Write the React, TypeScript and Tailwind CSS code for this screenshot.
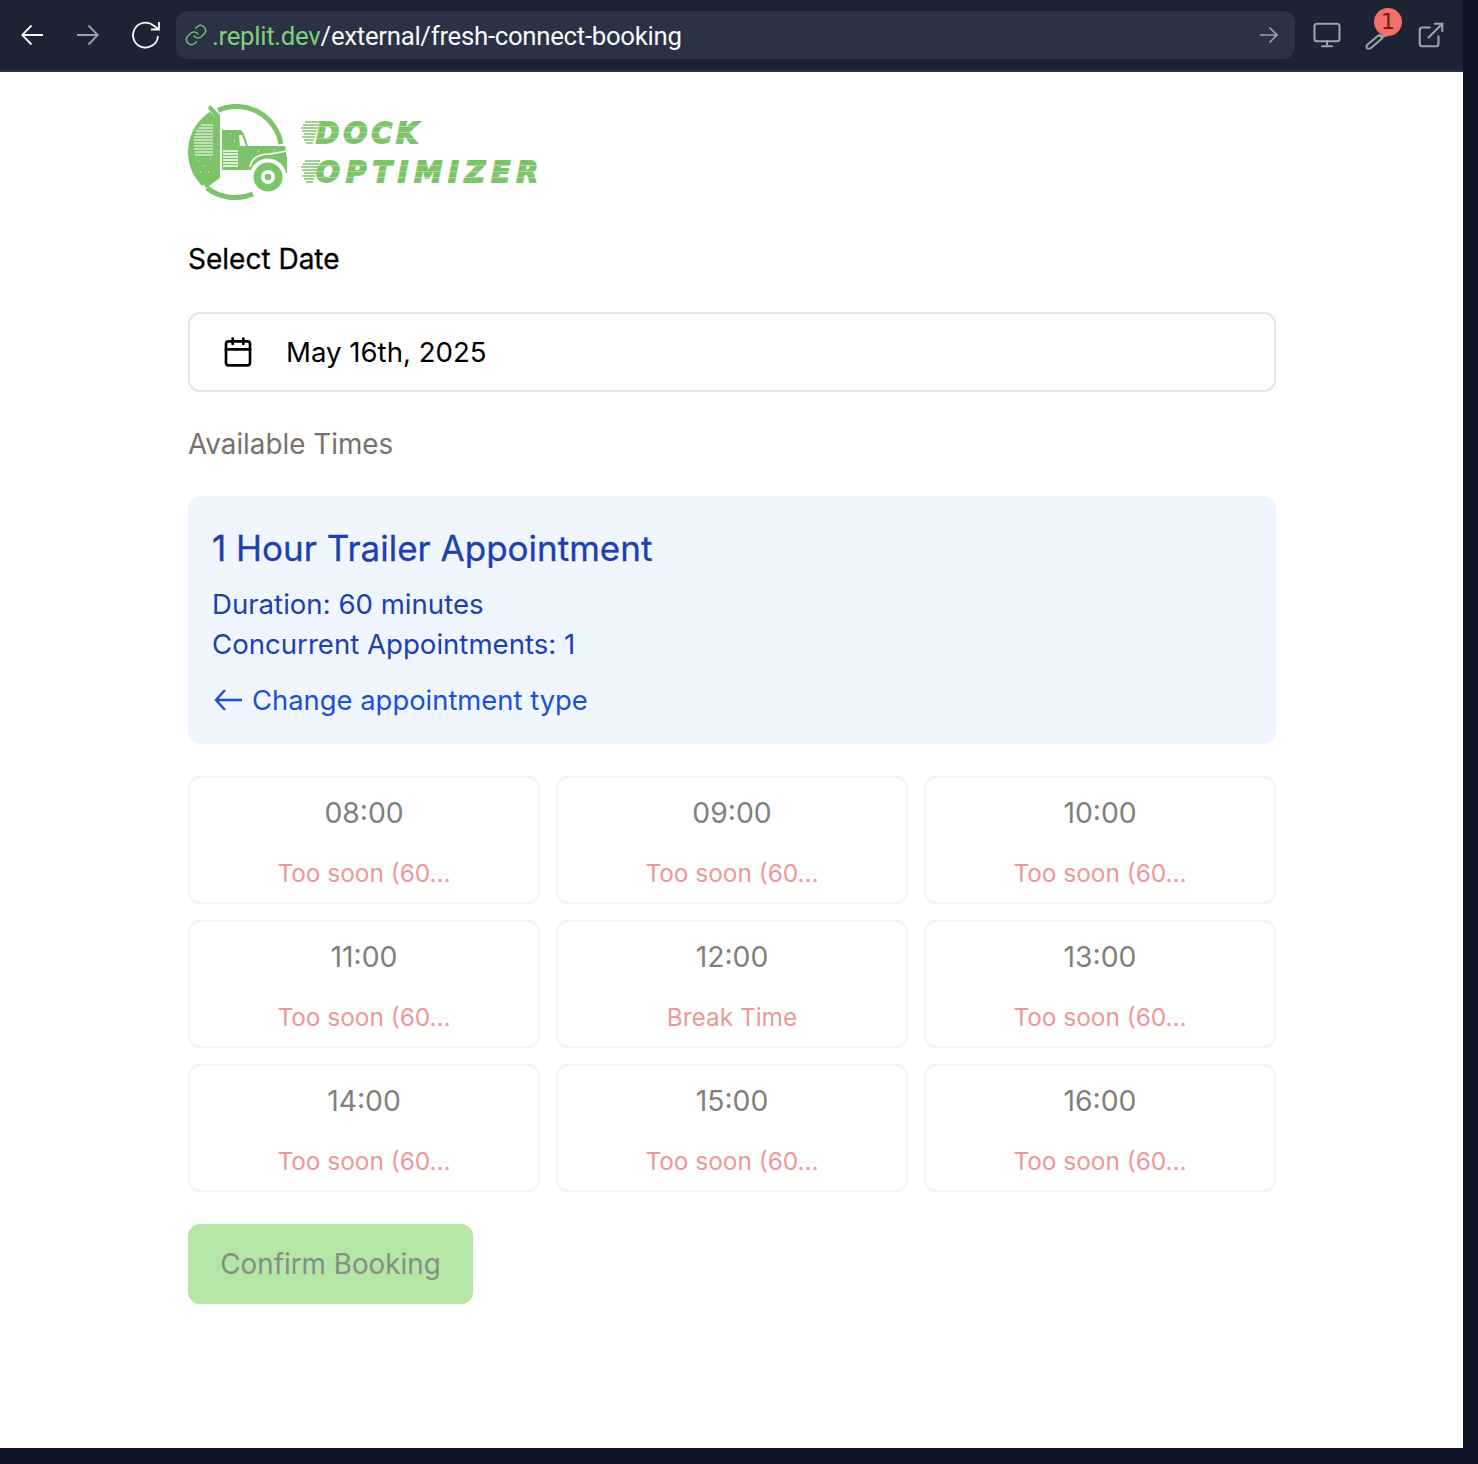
import { Calendar, ExternalLink, Monitor } from 'lucide-react'

const slots = [
  { time: '08:00', note: 'Too soon (60...' },
  { time: '09:00', note: 'Too soon (60...' },
  { time: '10:00', note: 'Too soon (60...' },
  { time: '11:00', note: 'Too soon (60...' },
  { time: '12:00', note: 'Break Time' },
  { time: '13:00', note: 'Too soon (60...' },
  { time: '14:00', note: 'Too soon (60...' },
  { time: '15:00', note: 'Too soon (60...' },
  { time: '16:00', note: 'Too soon (60...' },
]

const green = '#7cc36a'

// speed lines left of the wordmark, ends follow the slant of the first letter
const lineStarts = [117, 115, 113, 114, 116, 114, 116, 118]
const speedLines = (top: number) =>
  lineStarts.map((x, i) => (
    <path key={i} d={`M${x} ${top + i * 3}H${132 - i}`} stroke={green} strokeWidth="1.5" />
  ))

const Logo = () => (
  <svg width="352" height="96" viewBox="0 0 352 96" className="block">
    {/* ring */}
    <path d="M30 6.2 A45.5 45.5 0 0 1 93 40" fill="none" stroke={green} strokeWidth="5" />
    <path d="M19 84 A46 46 0 0 0 65 90" fill="none" stroke={green} strokeWidth="5" />
    {/* left half disc */}
    <path d="M22 7.7 L28 14 V73 L14 81.9 A48 48 0 0 1 22 7.7 Z" fill={green} />
    <path d="M13 21H25M10 24H25M8 27H25M7 30H25M6 33H25M6 36H25M6 39H25M6 42H25M6 45H25M7 48H25M7 51H25" stroke="#ffffff" strokeWidth="1.2" />
    {/* exhaust stack */}
    <path d="M22 1 L32 11 V74 L18 84 L16 81 L27 72 V13 L20 4 Z" fill={green} />
    {/* cab */}
    <path d="M34 26 H53 L56 30 L60 42 H97 L99 54 V69 H64 V66 H34 Z" fill={green} />
    <path d="M51 31 L54 31 L58 42 H52 Z" fill="#ffffff" />
    <path d="M35 47h15M35 50h15M35 53h15M35 56h15M35 59h15M35 62h15" stroke="#ffffff" strokeWidth="1.3" />
    {/* fender and wheel */}
    <path d="M62 63 Q64 50 82 50 L99 47" fill="none" stroke="#ffffff" strokeWidth="1.6" />
    <circle cx="80" cy="73" r="18.5" fill="#ffffff" />
    <circle cx="80" cy="73" r="14.5" fill={green} />
    <circle cx="80" cy="73" r="7" fill="#ffffff" />
    <circle cx="80" cy="73" r="3.3" fill={green} />
    {/* worn print speckle */}
    <path d="M10 57h1M16 62h1M22 55h1M12 68h1M20 68h1M42 30h1M46 37h1M70 47h1M86 46h1" stroke="#ffffff" strokeWidth="1.2" />
    {/* wordmark */}
    {speedLines(18)}
    {speedLines(57)}
    <text x="128" y="39" textLength="102" lengthAdjust="spacing" fill={green} stroke={green} strokeWidth="1.8" fontFamily="'DejaVu Sans', sans-serif" fontWeight="700" fontStyle="italic" fontSize="28">DOCK</text>
    <text x="128" y="78" textLength="222" lengthAdjust="spacing" fill={green} stroke={green} strokeWidth="1.8" fontFamily="'DejaVu Sans', sans-serif" fontWeight="700" fontStyle="italic" fontSize="28">OPTIMIZER</text>
    <path d="M126 22.5h226M126 28.5h226M126 34.5h226M126 61.5h226M126 67.5h226M126 73.5h226" stroke="#ffffff" strokeWidth="0.6" opacity="0.6" />
  </svg>
)

const App = () => {
  return (
    <div className="w-[1478px] h-[1464px] bg-[#0e1525] font-['Inter',sans-serif] overflow-hidden">
      <div className="w-[1463px] h-[1448px] bg-white">
        {/* browser bar */}
        <header className="h-[72px] bg-[#1c2333] border-b-2 border-[#2b3245] flex items-start pt-[11px] pl-[21px] pr-[14px]">
          <div className="flex items-center h-12 w-[155px] shrink-0">
            <svg width="22" height="22" viewBox="0 0 22 22" fill="none" stroke="#f5f9fc" strokeWidth="1.8">
              <path d="M10.5 1.5 L1.2 11 L10.5 20.5 M1.2 11 H22" />
            </svg>
            <svg width="22" height="22" viewBox="0 0 22 22" fill="none" stroke="#9da2a6" strokeWidth="1.8" className="ml-[34px]">
              <path d="M11.5 1.5 L20.8 11 L11.5 20.5 M20.8 11 H0" />
            </svg>
            <svg width="30" height="28" viewBox="0 0 30 28" fill="none" stroke="#f5f9fc" strokeWidth="1.8" className="ml-[32px]">
              <path d="M27 15 A12.5 12.5 0 1 1 22.5 4.5 L28 8.5 M28 1 V8.5 H20" />
            </svg>
          </div>
          <div className="w-[1119px] h-12 rounded-xl bg-[#2b3245] flex items-center pl-[8px] pr-[14px] shrink-0">
            <svg width="24" height="24" viewBox="0 0 24 24" fill="none" stroke="#6fbf73" strokeWidth="1.5" strokeLinecap="round" className="shrink-0">
              <path d="M10 13a5 5 0 0 0 7.5.5l3-3a5 5 0 0 0-7-7l-1.8 1.7" />
              <path d="M14 11a5 5 0 0 0-7.5-.5l-3 3a5 5 0 0 0 7 7l1.7-1.7" />
            </svg>
            <span className="ml-[4px] mt-[2px] text-[25.8px] tracking-[-0.3px] font-['Roboto',sans-serif] text-[#f5f9fc]">
              <span className="text-[#7ed07e]">.replit.dev</span>/external/fresh-connect-booking
            </span>
            <svg width="18" height="18" viewBox="0 0 18 18" fill="none" stroke="#9da2a6" strokeWidth="1.6" className="ml-auto mr-[3px]">
              <path d="M9.5 1.5 L17 9 L9.5 16.5 M17 9 H0" />
            </svg>
          </div>
          <div className="flex items-center h-12 ml-[17px] gap-[22px]">
            <Monitor size={30} strokeWidth={1.7} className="text-[#9da2a6]" />
            <div className="relative w-[30px] h-[30px]">
              <svg width="30" height="30" viewBox="0 0 30 30" fill="none" stroke="#9da2a6" strokeWidth="2" strokeLinejoin="round">
                <path d="M3 25 L15 15 Q22 18 26 13 M15 15 L18.5 18 L7 28 Q4.5 29.5 3 28 Q2 26.5 3 25 Z" />
              </svg>
              <span className="absolute -top-[12px] left-[10px] w-[28px] h-[28px] rounded-full bg-[#f2706a] text-[#7a1410] text-[22px] leading-7 text-center font-['DejaVu_Sans',sans-serif]">1</span>
            </div>
            <ExternalLink size={30} strokeWidth={1.7} className="text-[#9da2a6]" />
          </div>
        </header>

        <main className="w-[1088px] ml-[188px] pt-8">
          <Logo />
          <h2 className="mt-[39px] text-[28px] leading-10 font-normal text-black [-webkit-text-stroke:0.3px_black]">Select Date</h2>

          <div className="mt-[33px] h-20 border-2 border-[#e5e5e5] rounded-xl flex items-center pl-[32px]">
            <Calendar size={32} strokeWidth={2} className="text-black" />
            <span className="ml-[32px] mt-[2px] text-[27.6px] text-black">May 16th, 2025</span>
          </div>

          <h3 className="mt-[32px] text-[27.8px] leading-10 font-normal text-[#78716c]">Available Times</h3>

          <section className="mt-[32px] h-[248px] rounded-xl bg-[#eff6ff] px-6 pt-6">
            <h4 className="text-[35px] leading-[56px] font-normal text-[#1e40af] [-webkit-text-stroke:0.3px_#1e40af]">1 Hour Trailer Appointment</h4>
            <p className="mt-[8px] text-[27.6px] leading-10 text-[#1e40af]">Duration: 60 minutes</p>
            <p className="text-[27.6px] leading-10 text-[#1e40af]">Concurrent Appointments: 1</p>
            <div className="mt-4 flex items-center text-[#1d4ed8] text-[27.4px] leading-10 pl-[2px]">
              <svg width="28" height="22" viewBox="0 0 28 22" fill="none" stroke="currentColor" strokeWidth="2.4">
                <path d="M11 1 L2 11 L11 21 M2 11 H28" />
              </svg>
              <span className="ml-[10px]">Change appointment type</span>
            </div>
          </section>

          <div className="mt-8 grid grid-cols-3 gap-4">
            {slots.map(s => (
              <div key={s.time} className="h-32 border-2 border-[#f2f2f2] rounded-xl flex flex-col items-center pt-[15px]">
                <span className="text-[28.3px] leading-10 font-normal text-[#7f7f7f]">{s.time}</span>
                <span className="mt-[24px] text-[24.4px] leading-8 text-[#ea9a96]">{s.note}</span>
              </div>
            ))}
          </div>

          <button className="mt-8 w-[285px] h-20 rounded-xl bg-[#b4e6a6] pt-[2px] text-[27.8px] font-normal text-[#858f82]">
            Confirm Booking
          </button>
        </main>
      </div>
    </div>
  )
}

export default App
